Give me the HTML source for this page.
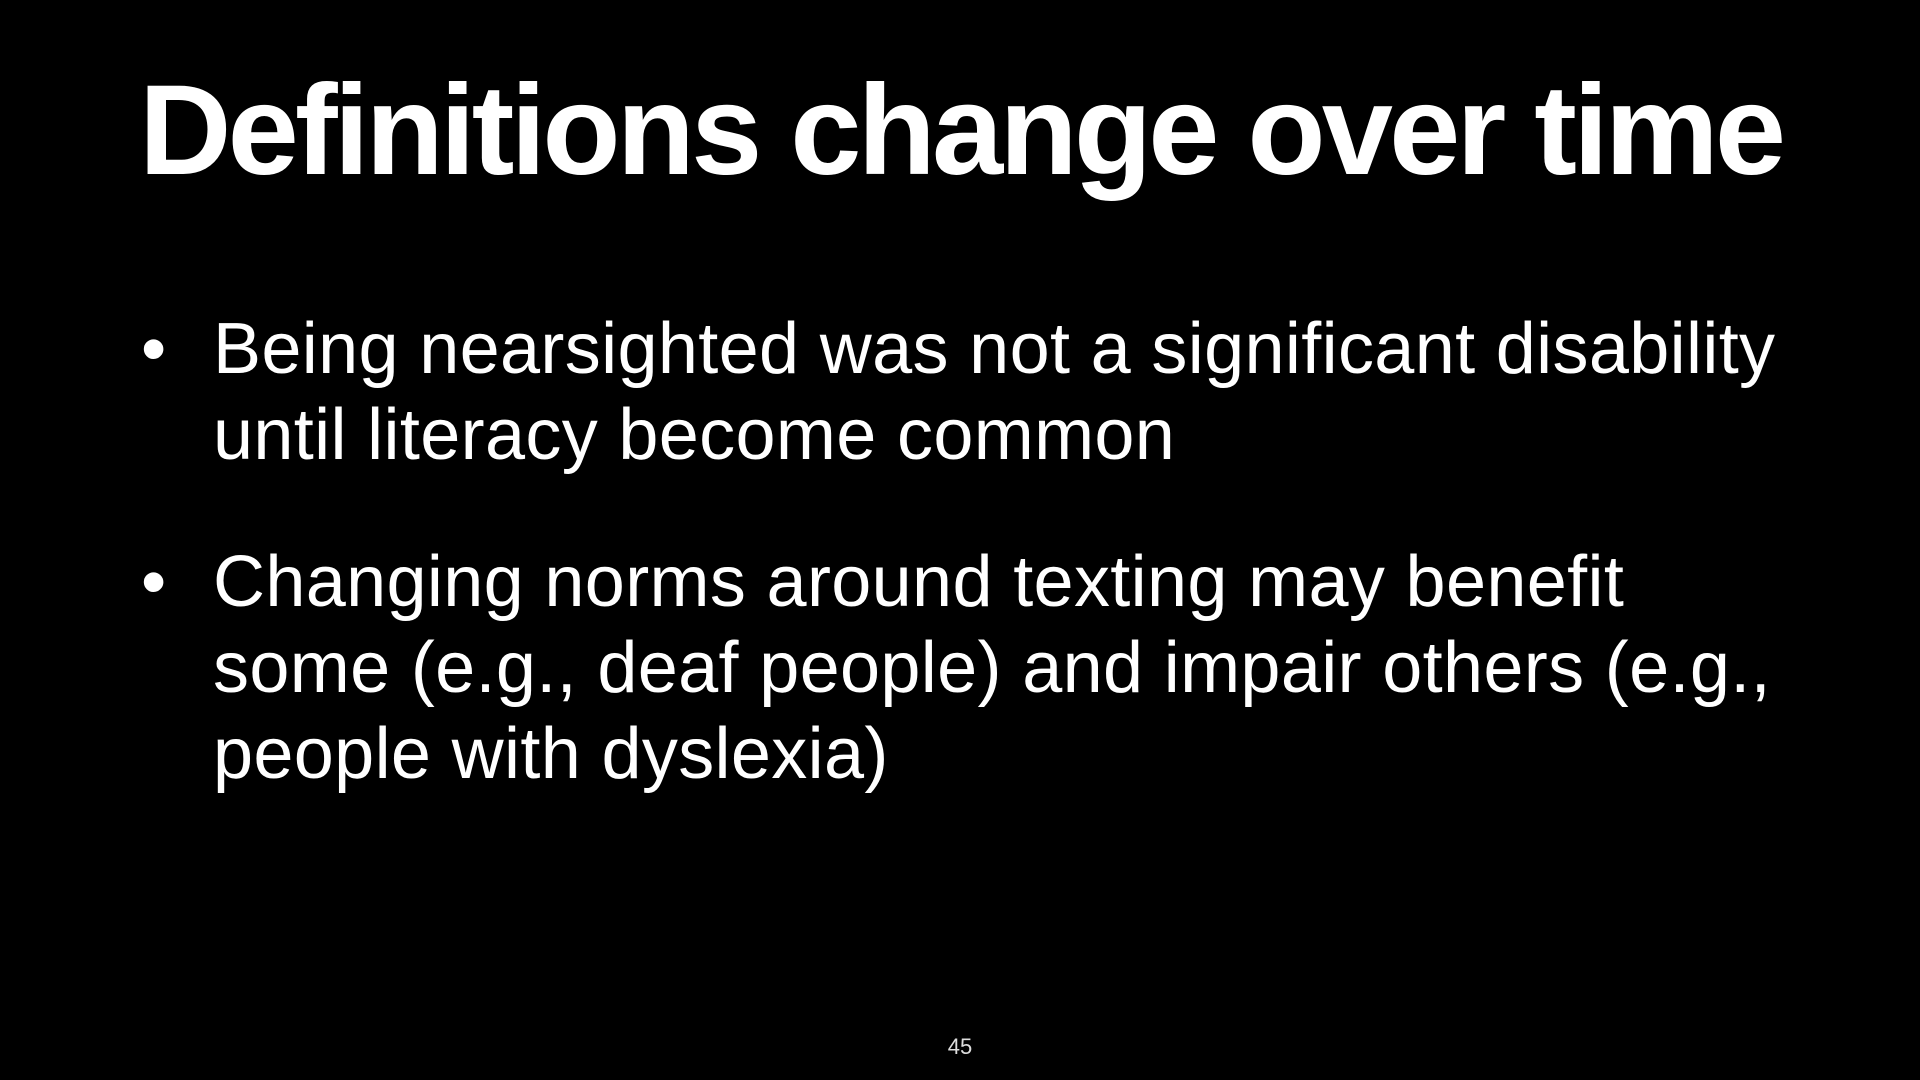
<!DOCTYPE html>
<html><head><meta charset="utf-8"><style>
html,body{margin:0;padding:0;background:#000;}
body{width:1920px;height:1080px;position:relative;overflow:hidden;font-family:"Liberation Sans",Arial,sans-serif;color:#fff;}
.t{position:absolute;left:139px;top:56px;font-size:128px;font-weight:bold;line-height:150px;white-space:nowrap;letter-spacing:-3.8px;}
.b{position:absolute;left:213px;font-size:72px;line-height:86px;white-space:nowrap;letter-spacing:0.35px;}
.dot{position:absolute;left:141px;font-size:72px;line-height:86px;}
.n{position:absolute;left:0;width:1920px;text-align:center;top:1034px;font-size:22px;line-height:26px;color:#ddd;}
</style></head><body>
<div class="t">Definitions change over time</div>
<div class="dot" style="top:306px">•</div>
<div class="b" style="top:306px">Being nearsighted was not a significant disability<br>until literacy become common</div>
<div class="dot" style="top:539px">•</div>
<div class="b" style="top:539px">Changing norms around texting may benefit<br>some (e.g., deaf people) and impair others (e.g.,<br>people with dyslexia)</div>
<div class="n">45</div>
</body></html>
